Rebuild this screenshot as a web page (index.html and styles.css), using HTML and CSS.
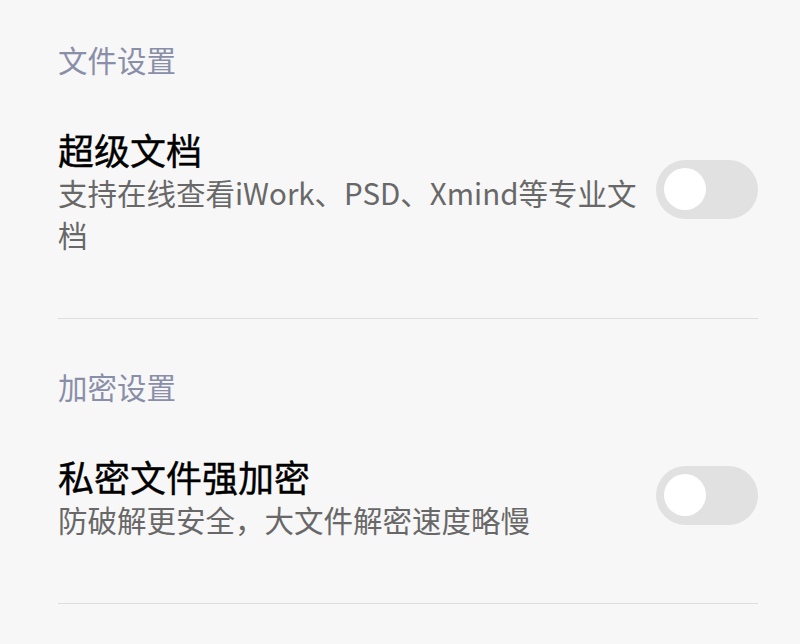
FILE: index.html
```html
<!DOCTYPE html>
<html lang="zh-CN">

<head>
  <meta charset="UTF-8" />
  <meta name="viewport" content="width=device-width, initial-scale=1.0" />
  <title>设置</title>
  <link rel="stylesheet" href="styles.css">
</head>

<body>
  <!-- 文件设置 -->
  <section class="group">
    <div class="group-title">文件设置</div>
    <div class="row">
      <div class="row-text">
        <div class="row-title">超级文档</div>
        <div class="row-desc">支持在线查看iWork、PSD、Xmind等专业文档</div>
      </div>
      <div class="switch"><span class="knob"></span></div>
    </div>
  </section>

  <!-- 加密设置 -->
  <section class="group">
    <div class="group-title">加密设置</div>
    <div class="row">
      <div class="row-text">
        <div class="row-title">私密文件强加密</div>
        <div class="row-desc">防破解更安全，大文件解密速度略慢</div>
      </div>
      <div class="switch"><span class="knob"></span></div>
    </div>
  </section>
</body>

</html>
```

FILE: styles.css
```css
body {
  margin: 0;
  padding: 0 42px 0 58px;
  background: #f7f7f7;
  font-family: "Noto Sans CJK SC", "Noto Sans", sans-serif;
  overflow: hidden;
}

.group {
  padding-top: 47px;
  border-bottom: 1px solid #dedede;
}

.group:first-child {
  padding-top: 39px;
}

.group-title {
  font-size: 29.5px;
  line-height: 40px;
  color: #8a8fa9;
}

.row {
  display: flex;
  align-items: center;
  gap: 14px;
  padding: 48px 0 63px;
}

.row-text {
  flex: 1;
  min-width: 0;
}

.row-title {
  font-size: 36px;
  line-height: 44px;
  color: #000;
  -webkit-text-stroke: 0.4px #000;
}

.row-desc {
  font-size: 29.5px;
  line-height: 42px;
  color: #686868;
}

.switch {
  width: 102px;
  height: 59px;
  margin-bottom: 4px;
  border-radius: 30px;
  background: #e1e1e1;
  display: flex;
  align-items: center;
  padding-left: 8px;
  box-sizing: border-box;
  flex-shrink: 0;
}

.knob {
  width: 42px;
  height: 42px;
  border-radius: 50%;
  background: #fff;
}
```
